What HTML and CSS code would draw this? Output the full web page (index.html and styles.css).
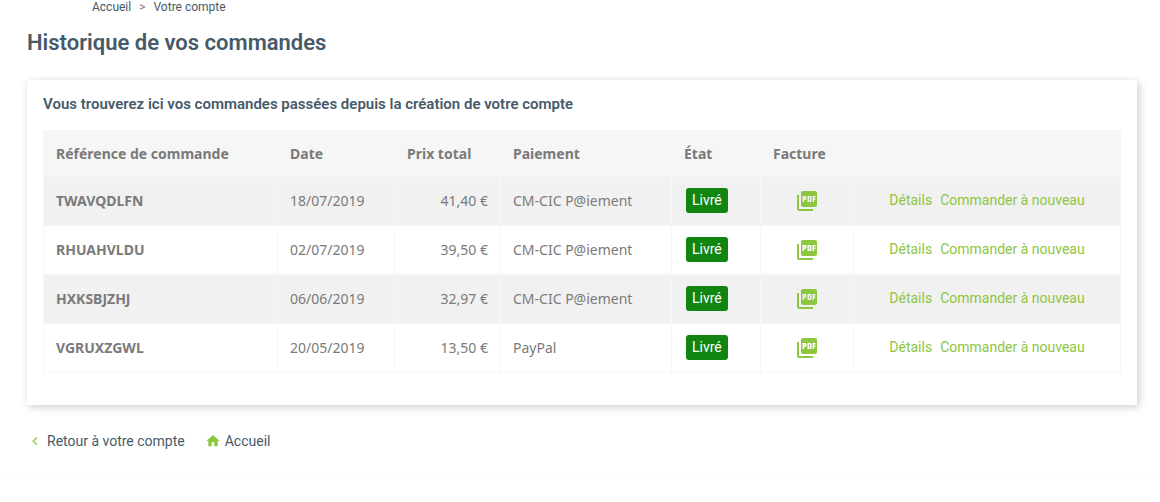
FILE: index.html
```html
<!DOCTYPE html>
<html lang="fr">
<head>
    <meta charset="UTF-8">
    <meta name="viewport" content="width=device-width, initial-scale=1.0">
    <title>Historique de vos commandes</title>
    <link rel="stylesheet" href="styles.css">
</head>
<body>
    <!-- icônes partagées -->
    <svg class="sprite" aria-hidden="true">
        <symbol id="icon-pdf" viewBox="0 0 24 24">
            <path d="M20 2H8c-1.1 0-2 .9-2 2v12c0 1.1.9 2 2 2h12c1.1 0 2-.9 2-2V4c0-1.1-.9-2-2-2zm-8.500 7.500c0 .83-.67 1.500-1.500 1.500H9v2H7.500V7H10c.83 0 1.500.67 1.500 1.500v1zm5 2c0 .83-.67 1.500-1.500 1.500h-2.500V7H15c.83 0 1.500.67 1.500 1.500v3zm4-3H19v1h1.500V11H19v2h-1.500V7h3v1.500zM9 9.500h1v-1H9v1zM4 6H2v14c0 1.100.9 2 2 2h14v-2H4V6zm10 5.500h1v-3h-1v3z"/>
        </symbol>
        <symbol id="icon-left" viewBox="0 0 24 24">
            <path d="M15.410 7.410L14 6l-6 6 6 6 1.410-1.410L10.830 12z"/>
        </symbol>
        <symbol id="icon-home" viewBox="0 0 24 24">
            <path d="M10 20v-6h4v6h5v-8h3L12 3 2 12h3v8z"/>
        </symbol>
    </svg>

    <div class="wrapper">
        <nav class="breadcrumb">
            <a href="#">Accueil</a>
            <span class="separator">&gt;</span>
            <a href="#">Votre compte</a>
        </nav>

        <h1>Historique de vos commandes</h1>

        <section class="card">
            <h2>Vous trouverez ici vos commandes passées depuis la création de votre compte</h2>
            <table class="orders">
                <thead>
                    <tr>
                        <th class="col-ref">Référence de commande</th>
                        <th class="col-date">Date</th>
                        <th class="col-price">Prix total</th>
                        <th class="col-payment">Paiement</th>
                        <th class="col-state">État</th>
                        <th class="col-invoice">Facture</th>
                        <th></th>
                    </tr>
                </thead>
                <tbody>
                    <tr>
                        <th scope="row">TWAVQDLFN</th>
                        <td>18/07/2019</td>
                        <td class="price">41,40 €</td>
                        <td>CM-CIC P@iement</td>
                        <td class="state"><span class="label">Livré</span></td>
                        <td class="invoice"><a href="#" aria-label="Facture"><svg class="icon-pdf"><use href="#icon-pdf"/></svg></a></td>
                        <td class="actions"><a href="#">Détails</a><a href="#">Commander à nouveau</a></td>
                    </tr>
                    <tr>
                        <th scope="row">RHUAHVLDU</th>
                        <td>02/07/2019</td>
                        <td class="price">39,50 €</td>
                        <td>CM-CIC P@iement</td>
                        <td class="state"><span class="label">Livré</span></td>
                        <td class="invoice"><a href="#" aria-label="Facture"><svg class="icon-pdf"><use href="#icon-pdf"/></svg></a></td>
                        <td class="actions"><a href="#">Détails</a><a href="#">Commander à nouveau</a></td>
                    </tr>
                    <tr>
                        <th scope="row">HXKSBJZHJ</th>
                        <td>06/06/2019</td>
                        <td class="price">32,97 €</td>
                        <td>CM-CIC P@iement</td>
                        <td class="state"><span class="label">Livré</span></td>
                        <td class="invoice"><a href="#" aria-label="Facture"><svg class="icon-pdf"><use href="#icon-pdf"/></svg></a></td>
                        <td class="actions"><a href="#">Détails</a><a href="#">Commander à nouveau</a></td>
                    </tr>
                    <tr>
                        <th scope="row">VGRUXZGWL</th>
                        <td>20/05/2019</td>
                        <td class="price">13,50 €</td>
                        <td>PayPal</td>
                        <td class="state"><span class="label">Livré</span></td>
                        <td class="invoice"><a href="#" aria-label="Facture"><svg class="icon-pdf"><use href="#icon-pdf"/></svg></a></td>
                        <td class="actions"><a href="#">Détails</a><a href="#">Commander à nouveau</a></td>
                    </tr>
                </tbody>
            </table>
        </section>

        <div class="page-links">
            <a href="#"><svg class="icon"><use href="#icon-left"/></svg>Retour à votre compte</a>
            <a href="#"><svg class="icon"><use href="#icon-home"/></svg>Accueil</a>
        </div>
    </div>

    <footer class="footer"></footer>
</body>
</html>
```
FILE: styles.css
```css
body {
    margin: 0;
    background: #fff;
    color: #7a7a7a;
    font-family: Roboto, Arial, sans-serif;
    font-size: 14px;
    line-height: 20px;
}
a {
    color: #465a69;
    text-decoration: none;
}
a:hover {
    text-decoration: underline;
}
.sprite {
    display: none;
}
.wrapper {
    padding: 0 23px 0 27px;
}
.breadcrumb {
    display: flex;
    gap: 8px;
    padding-left: 65px;
    font-size: 12px;
    line-height: 14px;
}
h1 {
    margin: 16px 0 24px;
    color: #465a69;
    font-size: 22px;
    font-weight: 600;
    line-height: 26px;
}
.card {
    padding: 14px 16px 32px;
    background: #fff;
    box-shadow: 2px 2px 8px rgba(0, 0, 0, 0.2);
}
h2 {
    margin: 0 0 16px;
    color: #465a69;
    font-size: 15px;
    font-weight: 600;
    line-height: 20px;
}
.orders {
    width: 100%;
    border-collapse: collapse;
    table-layout: fixed;
    font-family: "Noto Sans", sans-serif;
}
.orders th,
.orders td {
    box-sizing: border-box;
    height: 49px;
    padding: 0 12px;
    border: 1px solid #f6f6f6;
    text-align: left;
    vertical-align: middle;
}
.orders thead th {
    height: 46px;
    background: #f6f6f6;
}
.orders tbody tr:nth-child(odd) {
    background: #f1f1f1;
}
.col-ref { width: 234px; }
.col-date { width: 117px; }
.col-price { width: 106px; }
.col-payment { width: 171px; }
.col-state { width: 89px; }
.col-invoice { width: 93px; }
.orders .price {
    text-align: right;
}
.orders .state {
    padding-bottom: 2px;
}
.orders .invoice {
    text-align: center;
}
.orders .actions {
    padding-bottom: 2px;
    font-family: Roboto, Arial, sans-serif;
    text-align: center;
}
.actions a {
    margin: 0 4px;
    color: #8dc63f;
}
.label {
    display: inline-block;
    margin-left: 2px;
    padding: 2px 6px 3px;
    border-radius: 3px;
    background: #108510;
    color: #fff;
    font-family: Roboto, Arial, sans-serif;
}
.icon-pdf {
    display: inline-block;
    width: 24px;
    height: 24px;
    fill: #8dc63f;
    vertical-align: middle;
}
.page-links {
    display: flex;
    gap: 20px;
    padding: 26px 0 25px;
}
.page-links a {
    display: flex;
    align-items: center;
    gap: 4px;
}
.icon {
    width: 16px;
    height: 16px;
    fill: #8dc63f;
}
.footer {
    border-top: 1px solid #fafafa;
}
```
